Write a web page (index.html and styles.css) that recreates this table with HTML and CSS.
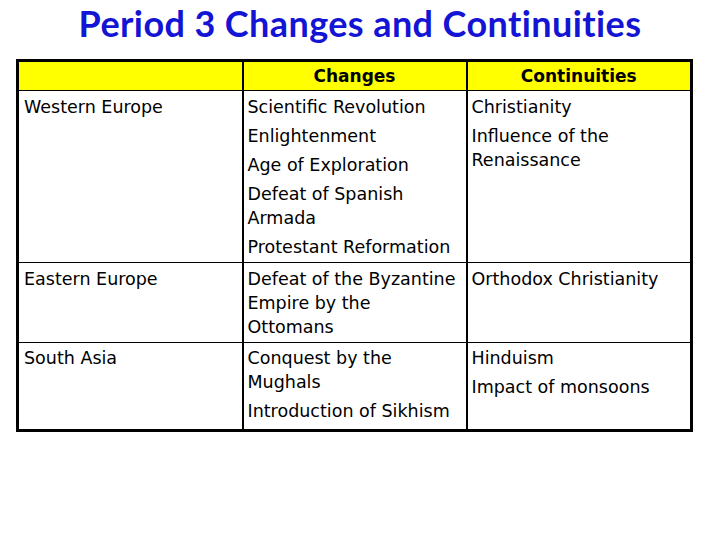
FILE: index.html
```html
<!DOCTYPE html>
<html>
<head>
<meta charset="utf-8">
<link rel="stylesheet" href="styles.css">
</head>
<body>
<h1 class="title">Period 3 Changes and Continuities</h1>
<table class="grid">
  <colgroup>
    <col class="c1"><col class="c2"><col class="c3">
  </colgroup>
  <thead>
    <tr class="head">
      <th></th>
      <th>Changes</th>
      <th>Continuities</th>
    </tr>
  </thead>
  <tbody>
    <tr>
      <td><p>Western Europe</p></td>
      <td>
        <p>Scientific Revolution</p>
        <p>Enlightenment</p>
        <p>Age of Exploration</p>
        <p>Defeat of Spanish Armada</p>
        <p>Protestant Reformation</p>
      </td>
      <td>
        <p>Christianity</p>
        <p>Influence of the Renaissance</p>
      </td>
    </tr>
    <tr>
      <td><p>Eastern Europe</p></td>
      <td><p>Defeat of the Byzantine Empire by the Ottomans</p></td>
      <td><p>Orthodox Christianity</p></td>
    </tr>
    <tr class="last">
      <td><p>South Asia</p></td>
      <td>
        <p>Conquest by the Mughals</p>
        <p>Introduction of Sikhism</p>
      </td>
      <td>
        <p>Hinduism</p>
        <p>Impact of monsoons</p>
      </td>
    </tr>
  </tbody>
</table>
</body>
</html>
```
FILE: styles.css
```css
html, body {
  margin: 0;
  padding: 0;
  background: #ffffff;
}
body {
  width: 720px;
  height: 540px;
  overflow: hidden;
}
.title {
  margin: 0;
  padding-top: 1px;
  height: 58px;
  text-align: center;
  font-family: Lato, "Open Sans", sans-serif;
  font-weight: 700;
  font-size: 36px;
  letter-spacing: 0.4px;
  line-height: 44px;
  color: #1414d4;
}
.grid {
  margin-left: 16px;
  width: 674px;
  border-collapse: collapse;
  border: 3px solid #000;
  table-layout: fixed;
  font-family: "DejaVu Sans", Verdana, sans-serif;
  font-size: 17.5px;
  color: #000;
}
.c1 { width: 225px; }
.c2 { width: 224px; }
.c3 { width: 225px; }
.grid th, .grid td {
  border-top: 1px solid #000;
  border-bottom: 1px solid #000;
  border-left: 2px solid #000;
  border-right: 2px solid #000;
  vertical-align: top;
  text-align: left;
  padding: 4px 4px 3px 5px;
}
.grid td + td {
  padding-left: 4px;
}
.head th {
  background: #ffff00;
  font-weight: 700;
  text-align: center;
  height: 22px;
  line-height: 22px;
  font-size: 17px;
  padding: 3px 4px 3px 4px;
}
.last td {
  padding-top: 3px;
  padding-bottom: 6px;
}
.grid p {
  margin: 0 0 5px 0;
  line-height: 24px;
}
.grid p:last-child {
  margin-bottom: 0;
}
```
